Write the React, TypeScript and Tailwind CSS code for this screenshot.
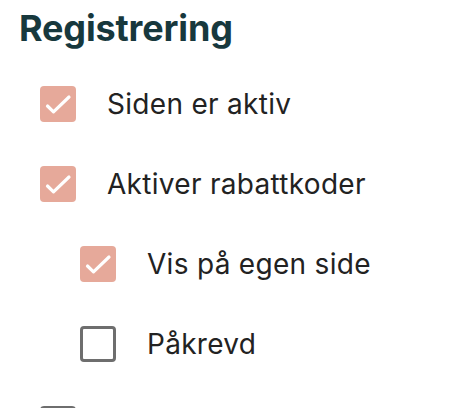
const Box = ({ checked }: { checked: boolean }) =>
  checked ? (
    <span className="flex h-9 w-9 shrink-0 items-center justify-center rounded-[4px] bg-[#e6a99a]">
      <svg width="36" height="36" viewBox="0 0 36 36" fill="none">
        <path d="M7.5 20l6 5.8L29 11" stroke="#fff" strokeWidth="3.2" strokeLinecap="round" strokeLinejoin="round" />
      </svg>
    </span>
  ) : (
    <span className="h-9 w-9 shrink-0 rounded-[4px] border-[3px] border-[#6e6e6e] bg-white" />
  );

const App = () => {
  const items = [
    { label: "Siden er aktiv", checked: true, indent: false },
    { label: "Aktiver rabattkoder", checked: true, indent: false },
    { label: "Vis på egen side", checked: true, indent: true },
    { label: "Påkrevd", checked: false, indent: true },
    { label: "", checked: false, indent: false },
  ];

  return (
    <div className="h-[408px] w-[452px] overflow-hidden bg-white font-['Inter',sans-serif]">
      <h2 className="pl-[19px] pt-[6px] text-[36px] font-bold leading-[44px] tracking-[-0.15px] text-[#17383d]">
        Registrering
      </h2>
      <div className="mt-[36px] flex flex-col gap-[44px] pl-[40px]">
        {items.map((item, i) => (
          <label
            key={i}
            className={`flex items-center gap-[31px] ${item.indent ? "pl-[40px]" : ""}`}
          >
            <Box checked={item.checked} />
            <span className="text-[28px] leading-[36px] tracking-[0.3px] text-[#222]">{item.label}</span>
          </label>
        ))}
      </div>
    </div>
  );
};

export default App;
